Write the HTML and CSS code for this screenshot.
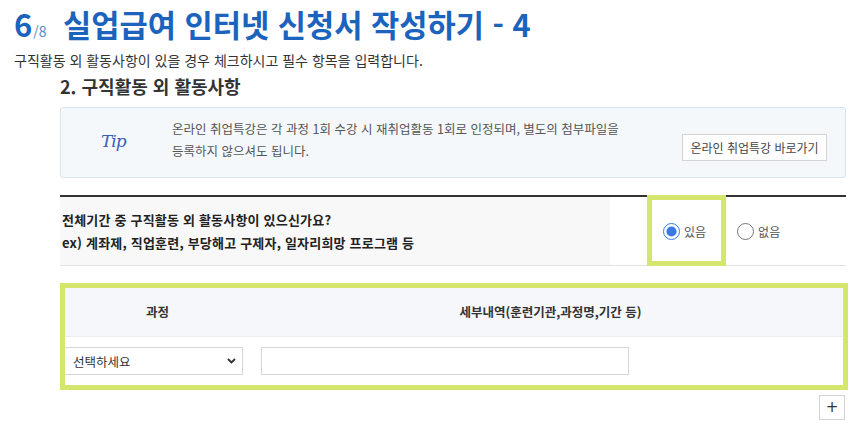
FILE: index.html
```html
<!DOCTYPE html>
<html lang="ko">
<head>
    <meta charset="UTF-8">
    <title>실업급여 인터넷 신청서 작성하기 - 4</title>
    <link rel="stylesheet" href="styles.css">
</head>
<body>
<div class="page">
    <h1 class="page-title">
        <span class="step">6</span><span class="step-total">/8</span>
        <span class="title-text">실업급여 인터넷 신청서 작성하기 - 4</span>
    </h1>
    <p class="page-desc">구직활동 외 활동사항이 있을 경우 체크하시고 필수 항목을 입력합니다.</p>

    <div class="section">
        <h2 class="section-title">2. 구직활동 외 활동사항</h2>

        <div class="tip-box">
            <div class="tip-mark">Tip</div>
            <p class="tip-text">온라인 취업특강은 각 과정 1회 수강 시 재취업활동 1회로 인정되며, 별도의 첨부파일을<br>등록하지 않으셔도 됩니다.</p>
            <a class="btn-line" href="#">온라인 취업특강 바로가기</a>
        </div>

        <div class="question">
            <div class="question-label">
                <div>전체기간 중 구직활동 외 활동사항이 있으신가요?</div>
                <div>ex) 계좌제, 직업훈련, 부당해고 구제자, 일자리희망 프로그램 등</div>
            </div>
            <div class="question-field">
                <label class="radio"><input type="radio" name="etc" checked>있음</label>
                <label class="radio"><input type="radio" name="etc">없음</label>
                <span class="highlight highlight-radio"></span>
            </div>
        </div>

        <div class="table-wrap">
            <table class="activity-table">
                <thead>
                <tr>
                    <th class="col-course">과정</th>
                    <th>세부내역(훈련기관,과정명,기간 등)</th>
                </tr>
                </thead>
                <tbody>
                <tr>
                    <td class="col-course">
                        <div class="select-box">
                            <select>
                                <option>선택하세요</option>
                                <option>계좌제</option>
                                <option>직업훈련</option>
                            </select>
                            <svg class="select-arrow" width="9" height="6" viewBox="0 0 9 6"><path d="M1 1l3.5 3.5L8 1" fill="none" stroke="#333" stroke-width="1.8"/></svg>
                        </div>
                    </td>
                    <td><input class="text-input" type="text"></td>
                </tr>
                </tbody>
            </table>
            <span class="highlight highlight-table"></span>
        </div>

        <div class="table-actions">
            <button class="btn-add" type="button">+</button>
        </div>
    </div>
</div>
</body>
</html>
```

FILE: styles.css
```css
body{
    margin: 0;
    background: #fff;
    color: #333;
    font-family: "Noto Sans CJK KR", "Noto Sans", sans-serif;
}
.page{
    width: 863px;
}
.page-title{
    margin: 0;
    padding: 4px 14px 0 14px;
    height: 40px;
    font-size: 30px;
    line-height: 40px;
    font-weight: bold;
    color: #1b63bc;
    white-space: nowrap;
}
.step{
    font-size: 31px;
}
.step-total{
    font-size: 14px;
    font-weight: normal;
    color: #5d86c0;
    margin-left: 1px;
}
.title-text{
    font-size: 30.7px;
    margin-left: 8px;
}
.page-desc{
    margin: 6px 0 0 0;
    padding: 0 14px;
    font-size: 14px;
    line-height: 20px;
    color: #333;
}
.section{
    margin-left: 60px;
    width: 786px;
}
.section-title{
    margin: 4px 0 0 0;
    font-size: 18px;
    line-height: 24px;
    font-weight: bold;
    color: #333;
}
.tip-box{
    display: flex;
    align-items: center;
    margin-top: 9px;
    height: 71px;
    box-sizing: border-box;
    padding: 0 18px 0 40px;
    background: #f4f8fb;
    border: 1px solid #d9e5ee;
    border-radius: 3px;
}
.tip-mark{
    width: 71px;
    flex: none;
    font-family: "DejaVu Serif", serif;
    font-style: italic;
    font-size: 17px;
    color: #3b5db3;
    margin-top: -4px;
    letter-spacing: -1px;
}
.tip-text{
    flex: 1;
    margin: -5px 0 0 0;
    font-size: 12.5px;
    line-height: 22px;
    color: #555;
}
.btn-line{
    flex: none;
    display: inline-block;
    margin-top: 9px;
    width: 145px;
    height: 27px;
    box-sizing: border-box;
    border: 1px solid #d3d3d3;
    background: #fff;
    text-align: center;
    font-size: 12px;
    line-height: 25px;
    color: #444;
    text-decoration: none;
}
.question{
    display: flex;
    margin-top: 17px;
    border-top: 2px solid #333;
    border-bottom: 1px solid #e2e2e2;
    height: 71px;
    box-sizing: border-box;
}
.question-label{
    width: 550px;
    box-sizing: border-box;
    padding: 11px 0 0 2px;
    background: #f8f8f8;
    font-size: 13px;
    line-height: 23px;
    letter-spacing: 0.2px;
    font-weight: bold;
    color: #222;
}
.question-field{
    position: relative;
    flex: 1;
    display: flex;
    align-items: center;
    padding-left: 53px;
    gap: 31px;
}
.radio{
    display: inline-flex;
    align-items: center;
    font-size: 12px;
    color: #555;
}
.radio input{
    width: 17px;
    height: 17px;
    margin: 0 4px 0 0;
    accent-color: #3a78e6;
}
.highlight{
    position: absolute;
    border: 5px solid #d4e66b;
    pointer-events: none;
}
.highlight-radio{
    left: 37px;
    top: -2px;
    width: 79px;
    height: 71px;
    box-sizing: border-box;
}
.table-wrap{
    position: relative;
    margin-top: 20px;
}
.highlight-table{
    top: -3px;
    left: 0;
    right: -2px;
    bottom: -4px;
}
.activity-table{
    width: 100%;
    border-collapse: collapse;
    font-size: 12.5px;
}
.activity-table th{
    height: 50px;
    padding: 0;
    background: #f5f7fa;
    font-weight: bold;
    color: #333;
    border-bottom: 1px solid #ebedf0;
}
.activity-table td{
    height: 49px;
    padding: 0 0 0 6px;
    box-sizing: border-box;
    vertical-align: middle;
}
.activity-table .col-course{
    width: 195px;
}
.activity-table td.col-course{
    padding: 0 12px 0 0;
}
.select-box{
    position: relative;
}
.select-box select{
    appearance: none;
    -webkit-appearance: none;
    width: 100%;
    height: 28px;
    box-sizing: border-box;
    border: 1px solid #d6d6d6;
    background: #fff;
    padding: 0 20px 0 12px;
    font-family: inherit;
    font-size: 12.5px;
    color: #333;
}
.select-arrow{
    position: absolute;
    right: 7px;
    top: 11px;
}
.text-input{
    width: 368px;
    height: 28px;
    box-sizing: border-box;
    border: 1px solid #d6d6d6;
    font-family: inherit;
    font-size: 12px;
}
.table-actions{
    display: flex;
    justify-content: flex-end;
    margin-top: 9px;
    padding-right: 1px;
}
.btn-add{
    width: 26px;
    height: 25px;
    padding: 0;
    border: 1px solid #d3d3d3;
    background: #fff;
    font-family: "DejaVu Sans", sans-serif;
    font-size: 15px;
    line-height: 20px;
    color: #333;
}
```
